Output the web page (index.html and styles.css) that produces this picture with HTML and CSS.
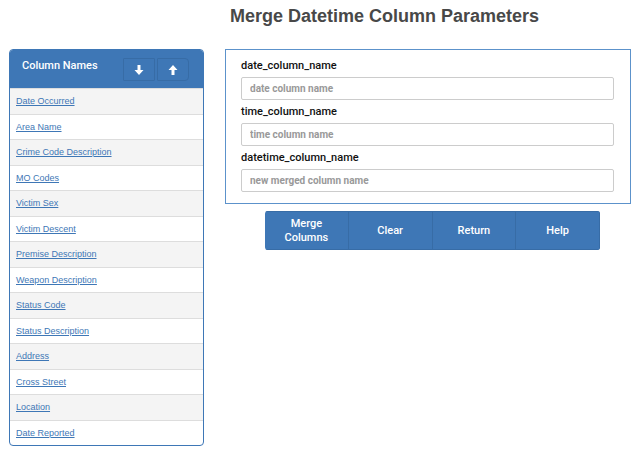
FILE: index.html
```html
<!DOCTYPE html>
<html lang="en">
<head>
<meta charset="utf-8">
<title>Merge Datetime Column Parameters</title>
<link rel="stylesheet" href="styles.css">
</head>
<body>
<div class="page">
  <aside class="panel">
    <header class="panel-head">
      <h2 class="panel-title">Column Names</h2>
      <div class="sorters">
        <button class="sort" type="button" aria-label="Move down"><svg class="arrow" viewBox="0 0 10 12"><path d="M3.5 1h3v5H9.5L5 11 .5 6h3z"/></svg></button>
        <button class="sort sort-last" type="button" aria-label="Move up"><svg class="arrow" viewBox="0 0 10 12"><path d="M3.5 11h3V6H9.5L5 1 .5 6h3z"/></svg></button>
      </div>
    </header>
    <ul class="columns">
      <li class="column"><a href="#">Date Occurred</a></li>
      <li class="column"><a href="#">Area Name</a></li>
      <li class="column"><a href="#">Crime Code Description</a></li>
      <li class="column"><a href="#">MO Codes</a></li>
      <li class="column"><a href="#">Victim Sex</a></li>
      <li class="column"><a href="#">Victim Descent</a></li>
      <li class="column"><a href="#">Premise Description</a></li>
      <li class="column"><a href="#">Weapon Description</a></li>
      <li class="column"><a href="#">Status Code</a></li>
      <li class="column"><a href="#">Status Description</a></li>
      <li class="column"><a href="#">Address</a></li>
      <li class="column"><a href="#">Cross Street</a></li>
      <li class="column"><a href="#">Location</a></li>
      <li class="column"><a href="#">Date Reported</a></li>
    </ul>
  </aside>
  <main class="main">
    <h1 class="title">Merge Datetime Column Parameters</h1>
    <form class="form">
      <div class="fields">
        <label class="label" for="date">date_column_name</label>
        <input class="input" id="date" type="text" placeholder="date column name">
        <label class="label" for="time">time_column_name</label>
        <input class="input" id="time" type="text" placeholder="time column name">
        <label class="label" for="datetime">datetime_column_name</label>
        <input class="input" id="datetime" type="text" placeholder="new merged column name">
      </div>
      <div class="actions">
        <button class="action" type="button">Merge Columns</button>
        <button class="action" type="button">Clear</button>
        <button class="action" type="button">Return</button>
        <button class="action" type="button">Help</button>
      </div>
    </form>
  </main>
</div>
</body>
</html>
```
FILE: styles.css
```css
* { box-sizing: border-box; }

body {
  margin: 0;
  background: #fff;
  font-family: Roboto, "Liberation Sans", sans-serif;
  color: #111;
}

.page {
  display: grid;
  grid-template-columns: 195fr 406fr;
  column-gap: 21px;
  align-items: start;
  padding: 0 9px;
}

.panel {
  margin-top: 49px;
  border: 1px solid #3e77b6;
  border-radius: 4px;
  overflow: hidden;
}

.panel-head {
  display: flex;
  justify-content: space-between;
  align-items: flex-start;
  height: 38px;
  padding: 8px 14px 0 12px;
  background: #3e77b6;
}

.panel-title {
  margin: 0;
  color: #fff;
  font-size: 11px;
  font-weight: 500;
  line-height: 16px;
}

.sorters { display: flex; gap: 2px; }

.sort {
  display: grid;
  place-items: center;
  width: 32px;
  height: 23px;
  padding: 0;
  border: 1px solid #376ca6;
  border-radius: 1px;
  background: #3e77b6;
}

.sort-last { border-radius: 1px 4px 4px 1px; }

.arrow { width: 10px; height: 12px; fill: #fff; }

.columns { margin: 0; padding: 0; list-style: none; }

.column {
  height: 25px;
  padding-left: 6px;
  border-top: 1px solid #ddd;
  font: 9px/24px "Liberation Sans", sans-serif;
}

.column:nth-child(odd) { height: 26px; background: #f4f4f4; }

.column a { color: #3e77b6; text-decoration: underline; }

.title {
  margin: 5px 0 21px 5px;
  color: #484848;
  font: bold 18px/23px "Liberation Sans", sans-serif;
}

.fields {
  display: flex;
  flex-direction: column;
  padding: 8px 16px 11px 15px;
  border: 1px solid #5c92cb;
}

.label {
  font-size: 11px;
  font-weight: 500;
  line-height: 16px;
  margin-bottom: 3px;
}

.input {
  width: 100%;
  height: 23px;
  margin-bottom: 4px;
  padding: 0 8px;
  border: 1px solid #ccc;
  border-radius: 2px;
  background: #fff;
  color: #555;
  font: bold 10px/16px Roboto, "Liberation Sans", sans-serif;
}

.input:last-child { margin-bottom: 0; }

.input::placeholder { color: #999; opacity: 1; }

.actions {
  display: flex;
  margin: 7px 31px 0 40px;
  border-radius: 3px;
  overflow: hidden;
}

.action {
  flex: 1 1 0;
  height: 39px;
  padding: 0 14px;
  border: 1px solid #376ca6;
  border-left-width: 0;
  background: #3e77b6;
  color: #fff;
  font: 500 11px/14px Roboto, "Liberation Sans", sans-serif;
}
```
